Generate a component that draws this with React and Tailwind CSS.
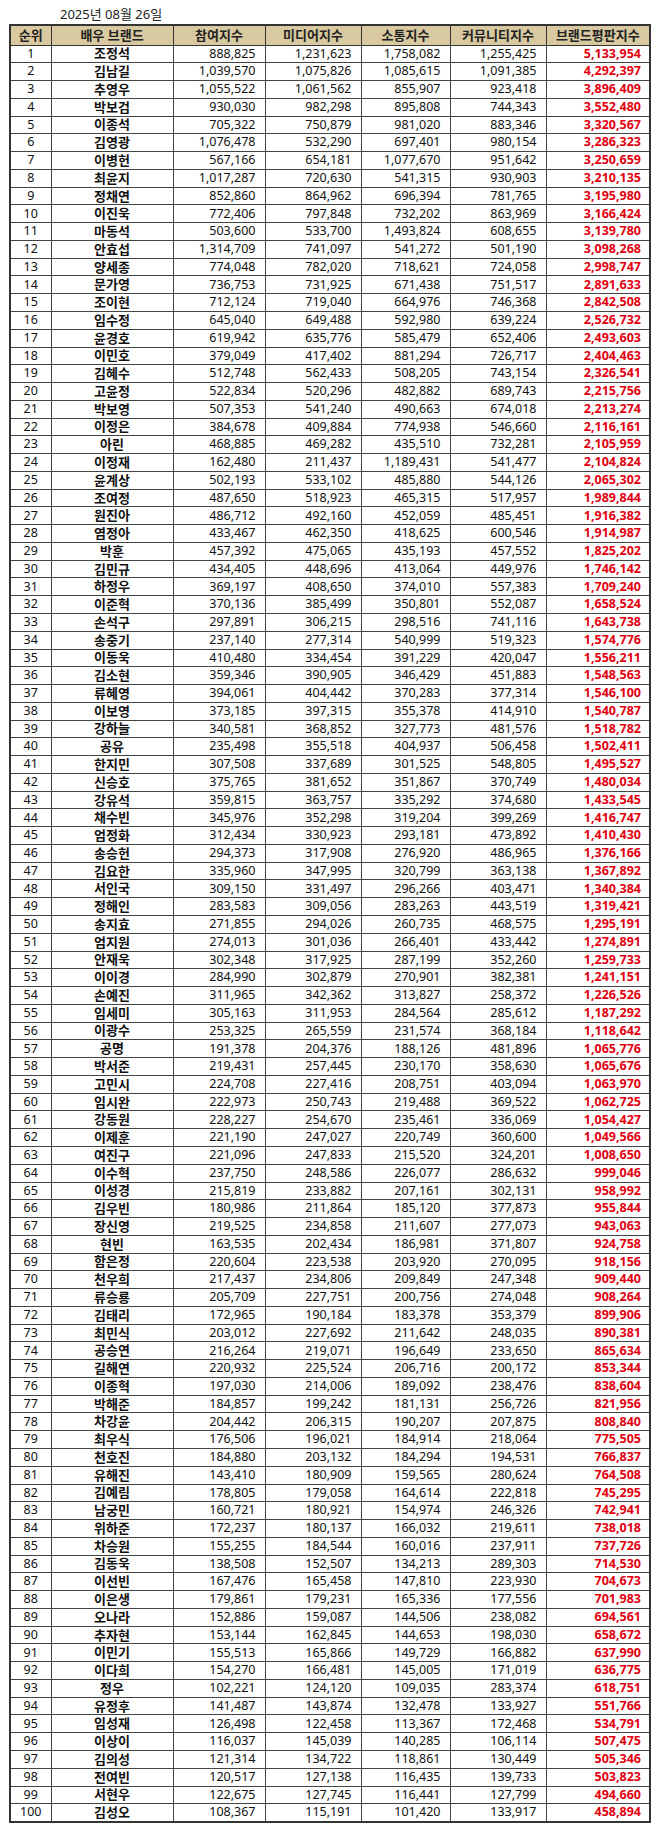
const raw = `조정석 888,825 1,231,623 1,758,082 1,255,425 5,133,954
김남길 1,039,570 1,075,826 1,085,615 1,091,385 4,292,397
추영우 1,055,522 1,061,562 855,907 923,418 3,896,409
박보검 930,030 982,298 895,808 744,343 3,552,480
이종석 705,322 750,879 981,020 883,346 3,320,567
김영광 1,076,478 532,290 697,401 980,154 3,286,323
이병헌 567,166 654,181 1,077,670 951,642 3,250,659
최윤지 1,017,287 720,630 541,315 930,903 3,210,135
정채연 852,860 864,962 696,394 781,765 3,195,980
이진욱 772,406 797,848 732,202 863,969 3,166,424
마동석 503,600 533,700 1,493,824 608,655 3,139,780
안효섭 1,314,709 741,097 541,272 501,190 3,098,268
양세종 774,048 782,020 718,621 724,058 2,998,747
문가영 736,753 731,925 671,438 751,517 2,891,633
조이현 712,124 719,040 664,976 746,368 2,842,508
임수정 645,040 649,488 592,980 639,224 2,526,732
윤경호 619,942 635,776 585,479 652,406 2,493,603
이민호 379,049 417,402 881,294 726,717 2,404,463
김혜수 512,748 562,433 508,205 743,154 2,326,541
고윤정 522,834 520,296 482,882 689,743 2,215,756
박보영 507,353 541,240 490,663 674,018 2,213,274
이정은 384,678 409,884 774,938 546,660 2,116,161
아린 468,885 469,282 435,510 732,281 2,105,959
이정재 162,480 211,437 1,189,431 541,477 2,104,824
윤계상 502,193 533,102 485,880 544,126 2,065,302
조여정 487,650 518,923 465,315 517,957 1,989,844
원진아 486,712 492,160 452,059 485,451 1,916,382
염정아 433,467 462,350 418,625 600,546 1,914,987
박훈 457,392 475,065 435,193 457,552 1,825,202
김민규 434,405 448,696 413,064 449,976 1,746,142
하정우 369,197 408,650 374,010 557,383 1,709,240
이준혁 370,136 385,499 350,801 552,087 1,658,524
손석구 297,891 306,215 298,516 741,116 1,643,738
송중기 237,140 277,314 540,999 519,323 1,574,776
이동욱 410,480 334,454 391,229 420,047 1,556,211
김소현 359,346 390,905 346,429 451,883 1,548,563
류혜영 394,061 404,442 370,283 377,314 1,546,100
이보영 373,185 397,315 355,378 414,910 1,540,787
강하늘 340,581 368,852 327,773 481,576 1,518,782
공유 235,498 355,518 404,937 506,458 1,502,411
한지민 307,508 337,689 301,525 548,805 1,495,527
신승호 375,765 381,652 351,867 370,749 1,480,034
강유석 359,815 363,757 335,292 374,680 1,433,545
채수빈 345,976 352,298 319,204 399,269 1,416,747
엄정화 312,434 330,923 293,181 473,892 1,410,430
송승헌 294,373 317,908 276,920 486,965 1,376,166
김요한 335,960 347,995 320,799 363,138 1,367,892
서인국 309,150 331,497 296,266 403,471 1,340,384
정해인 283,583 309,056 283,263 443,519 1,319,421
송지효 271,855 294,026 260,735 468,575 1,295,191
엄지원 274,013 301,036 266,401 433,442 1,274,891
안재욱 302,348 317,925 287,199 352,260 1,259,733
이이경 284,990 302,879 270,901 382,381 1,241,151
손예진 311,965 342,362 313,827 258,372 1,226,526
임세미 305,163 311,953 284,564 285,612 1,187,292
이광수 253,325 265,559 231,574 368,184 1,118,642
공명 191,378 204,376 188,126 481,896 1,065,776
박서준 219,431 257,445 230,170 358,630 1,065,676
고민시 224,708 227,416 208,751 403,094 1,063,970
임시완 222,973 250,743 219,488 369,522 1,062,725
강동원 228,227 254,670 235,461 336,069 1,054,427
이제훈 221,190 247,027 220,749 360,600 1,049,566
여진구 221,096 247,833 215,520 324,201 1,008,650
이수혁 237,750 248,586 226,077 286,632 999,046
이성경 215,819 233,882 207,161 302,131 958,992
김우빈 180,986 211,864 185,120 377,873 955,844
장신영 219,525 234,858 211,607 277,073 943,063
현빈 163,535 202,434 186,981 371,807 924,758
함은정 220,604 223,538 203,920 270,095 918,156
천우희 217,437 234,806 209,849 247,348 909,440
류승룡 205,709 227,751 200,756 274,048 908,264
김태리 172,965 190,184 183,378 353,379 899,906
최민식 203,012 227,692 211,642 248,035 890,381
공승연 216,264 219,071 196,649 233,650 865,634
길해연 220,932 225,524 206,716 200,172 853,344
이종혁 197,030 214,006 189,092 238,476 838,604
박해준 184,857 199,242 181,131 256,726 821,956
차강윤 204,442 206,315 190,207 207,875 808,840
최우식 176,506 196,021 184,914 218,064 775,505
천호진 184,880 203,132 184,294 194,531 766,837
유해진 143,410 180,909 159,565 280,624 764,508
김예림 178,805 179,058 164,614 222,818 745,295
남궁민 160,721 180,921 154,974 246,326 742,941
위하준 172,237 180,137 166,032 219,611 738,018
차승원 155,255 184,544 160,016 237,911 737,726
김동욱 138,508 152,507 134,213 289,303 714,530
이선빈 167,476 165,458 147,810 223,930 704,673
이은생 179,861 179,231 165,336 177,556 701,983
오나라 152,886 159,087 144,506 238,082 694,561
추자현 153,144 162,845 144,653 198,030 658,672
이민기 155,513 165,866 149,729 166,882 637,990
이다희 154,270 166,481 145,005 171,019 636,775
정우 102,221 124,120 109,035 283,374 618,751
유정후 141,487 143,874 132,478 133,927 551,766
임성재 126,498 122,458 113,367 172,468 534,791
이상이 116,037 145,039 140,285 106,114 507,475
김의성 121,314 134,722 118,861 130,449 505,346
전여빈 120,517 127,138 116,435 139,733 503,823
서현우 122,675 127,745 116,441 127,799 494,660
김성오 108,367 115,191 101,420 133,917 458,894`;

const rows = raw.split('\n').map(line => line.trim().split(' '));

const headers = ['순위', '배우 브랜드', '참여지수', '미디어지수', '소통지수', '커뮤니티지수', '브랜드평판지수'];
const widths = ['w-[41px]', 'w-[122px]', 'w-[92px]', 'w-[96px]', 'w-[89px]', 'w-[96px]', 'w-[104px]'];

const font = { fontFamily: '"Noto Sans", "Noto Sans CJK KR", sans-serif' };

export default function App() {
  return (
    <div className="w-[658px] h-[1830px] bg-white text-[#111]" style={font}>
      <div className="h-[24px] pl-[60px] pt-[7px] text-[13px] leading-[14px] text-[#222]">
        2025년 08월 26일
      </div>
      <table className="ml-[9px] w-[640px] table-fixed border-collapse border-2 border-[#333] text-[12.5px]">
        <colgroup>
          {widths.map((w, i) => (
            <col key={i} className={w} />
          ))}
        </colgroup>
        <thead>
          <tr className="bg-[#d8c9a0]">
            {headers.map((h, i) => (
              <th
                key={i}
                className="h-[20px] p-0 border border-[#333] font-semibold text-[13px] leading-none text-center text-[#222]"
              >
                {h}
              </th>
            ))}
          </tr>
        </thead>
        <tbody>
          {rows.map((r, idx) => (
            <tr key={idx}>
              <td className="h-[17.78px] p-0 border border-[#444] text-center leading-none">{idx + 1}</td>
              <td className="p-0 border border-[#444] text-center font-bold leading-none text-[13px]">{r[0]}</td>
              <td className="p-0 pr-[9px] border border-[#444] text-right leading-none">{r[1]}</td>
              <td className="p-0 pr-[9px] border border-[#444] text-right leading-none">{r[2]}</td>
              <td className="p-0 pr-[9px] border border-[#444] text-right leading-none">{r[3]}</td>
              <td className="p-0 pr-[9px] border border-[#444] text-right leading-none">{r[4]}</td>
              <td className="p-0 pr-[8px] border border-[#444] text-right leading-none font-bold text-[#e3000f]">{r[5]}</td>
            </tr>
          ))}
        </tbody>
      </table>
    </div>
  );
}
